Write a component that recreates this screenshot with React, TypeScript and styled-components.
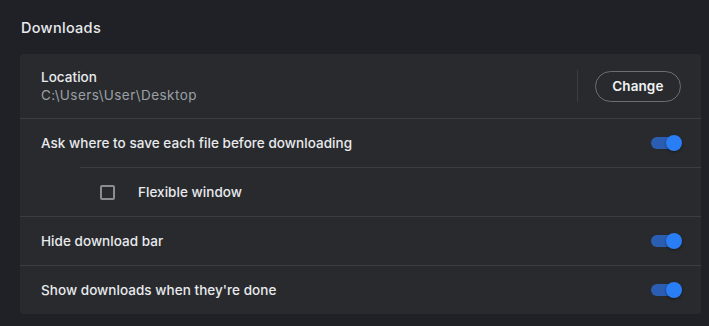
import React from 'react';
import styled, { createGlobalStyle } from 'styled-components';

const GlobalStyle = createGlobalStyle`
  html, body {
    margin: 0;
    padding: 0;
    background: #202127;
  }
  body {
    font-family: Inter, "Noto Sans", sans-serif;
    color: #e8eaed;
  }
`;

const Page = styled.div`
  width: 709px;
  height: 326px;
  padding: 17px 8px 0 20px;
  box-sizing: border-box;
`;

const Heading = styled.h2`
  margin: 0 0 15px 1px;
  font-size: 14.5px;
  font-weight: 500;
  letter-spacing: 0.3px;
  line-height: 22px;
  color: #e8eaed;
`;

const Card = styled.section`
  width: 681px;
  background: #292a2d;
  border-radius: 4px;
  overflow: hidden;
`;

const Row = styled.div<{ $tall?: boolean; $indent?: boolean }>`
  display: flex;
  align-items: center;
  height: ${(p) => (p.$tall ? 64 : 48)}px;
  margin-left: ${(p) => (p.$indent ? 60 : 0)}px;
  padding: 0 20px 0 21px;
  & + & {
    border-top: 1px solid #3c3d41;
  }
`;

const Text = styled.div`
  flex: 1;
  display: flex;
  flex-direction: column;
  gap: 2px;
`;

const Label = styled.span`
  font-size: 13.5px;
  font-weight: 500;
  letter-spacing: 0.04px;
  color: #e8eaed;
`;

const SubLabel = styled.span`
  font-size: 13.5px;
  letter-spacing: 0.45px;
  color: #9aa0a6;
`;

const Divider = styled.div`
  width: 1px;
  height: 32px;
  background: #3c3d41;
  margin-right: 17px;
`;

const Button = styled.button`
  height: 31px;
  padding: 0 16.5px;
  border-radius: 16px;
  border: 1px solid #6b6e73;
  background: transparent;
  color: #f1f3f4;
  font-family: inherit;
  font-size: 13.5px;
  font-weight: 600;
  letter-spacing: 0.1px;
`;

const Toggle = styled.span<{ $on?: boolean }>`
  position: relative;
  width: 30px;
  height: 12px;
  border-radius: 6px;
  background: ${(p) => (p.$on ? '#2b5eb3' : '#5f6368')};
  &::after {
    content: '';
    position: absolute;
    top: -2px;
    ${(p) => (p.$on ? 'right: -1px;' : 'left: -1px;')}
    width: 16px;
    height: 16px;
    border-radius: 50%;
    background: ${(p) => (p.$on ? '#2a7ef5' : '#dadce0')};
    box-shadow: 0 1px 3px rgba(0, 0, 0, 0.4);
  }
`;

const Checkbox = styled.span`
  width: 11px;
  height: 11px;
  border: 2px solid #8a8d92;
  border-radius: 2px;
  margin: 0 23px 0 -1px;
`;

export default function App() {
  return (
    <>
      <GlobalStyle />
      <Page>
        <Heading>Downloads</Heading>
        <Card>
          <Row $tall>
            <Text>
              <Label>Location</Label>
              <SubLabel>C:\Users\User\Desktop</SubLabel>
            </Text>
            <Divider />
            <Button>Change</Button>
          </Row>
          <Row>
            <Text>
              <Label>Ask where to save each file before downloading</Label>
            </Text>
            <Toggle $on />
          </Row>
          <Row $indent>
            <Checkbox />
            <Text>
              <Label>Flexible window</Label>
            </Text>
          </Row>
          <Row>
            <Text>
              <Label>Hide download bar</Label>
            </Text>
            <Toggle $on />
          </Row>
          <Row>
            <Text>
              <Label>Show downloads when they're done</Label>
            </Text>
            <Toggle $on />
          </Row>
        </Card>
      </Page>
    </>
  );
}
